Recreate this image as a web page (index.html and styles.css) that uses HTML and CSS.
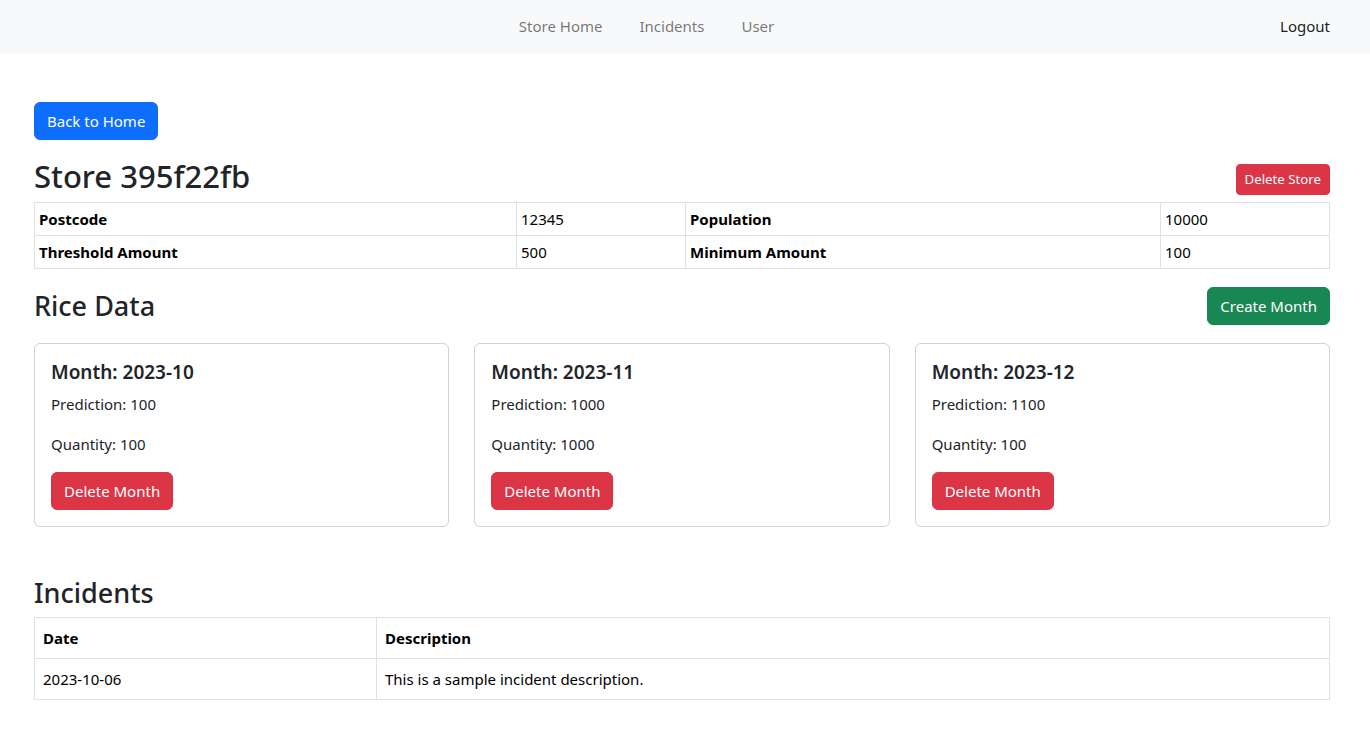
FILE: index.html
```html
<!DOCTYPE html>
<html lang="en">
<head>
<meta charset="utf-8">
<title>Store 395f22fb</title>
<link rel="stylesheet" href="styles.css">
</head>
<body>
<nav class="navbar">
  <ul class="nav-links">
    <li><a class="nav-link" href="#">Store Home</a></li>
    <li><a class="nav-link" href="#">Incidents</a></li>
    <li><a class="nav-link" href="#">User</a></li>
  </ul>
  <a class="nav-link logout" href="#">Logout</a>
</nav>
<main class="page">
  <a class="btn btn-primary back" href="#">Back to Home</a>
  <div class="header-row store-head">
    <h2 class="title">Store 395f22fb</h2>
    <button class="btn btn-danger btn-sm">Delete Store</button>
  </div>
  <table class="info-table">
    <tbody>
      <tr><th class="c1">Postcode</th><td class="c2">12345</td><th class="c3">Population</th><td>10000</td></tr>
      <tr><th class="c1">Threshold Amount</th><td class="c2">500</td><th class="c3">Minimum Amount</th><td>100</td></tr>
    </tbody>
  </table>
  <div class="header-row rice-head">
    <h3 class="subtitle">Rice Data</h3>
    <button class="btn btn-success">Create Month</button>
  </div>
  <div class="cards">
    <div class="card">
      <h5 class="card-title">Month: 2023-10</h5>
      <p>Prediction: 100</p>
      <p>Quantity: 100</p>
      <button class="btn btn-danger">Delete Month</button>
    </div>
    <div class="card">
      <h5 class="card-title">Month: 2023-11</h5>
      <p>Prediction: 1000</p>
      <p>Quantity: 1000</p>
      <button class="btn btn-danger">Delete Month</button>
    </div>
    <div class="card">
      <h5 class="card-title">Month: 2023-12</h5>
      <p>Prediction: 1100</p>
      <p>Quantity: 100</p>
      <button class="btn btn-danger">Delete Month</button>
    </div>
  </div>
  <h3 class="subtitle incidents-title">Incidents</h3>
  <table class="inc-table">
    <thead><tr><th class="d1">Date</th><th>Description</th></tr></thead>
    <tbody><tr><td>2023-10-06</td><td>This is a sample incident description.</td></tr></tbody>
  </table>
</main>
</body>
</html>
```
FILE: styles.css
```css
* { box-sizing: border-box; }
body {
  margin: 0;
  font-family: "Noto Sans", "Open Sans", sans-serif;
  font-size: 15px;
  line-height: 24px;
  color: #212529;
  background: #fff;
}
.navbar {
  height: 54px;
  background: #f8f9fa;
  display: flex;
  align-items: center;
  padding: 0 40px 2px 21px;
}
.nav-links {
  list-style: none;
  margin: 0 auto;
  padding: 0;
  display: flex;
}
.nav-link {
  display: block;
  padding: 8px 18.5px;
  color: rgba(0,0,0,.55);
  text-decoration: none;
}
.nav-link.logout { color: rgba(0,0,0,.9); padding: 8px 0 8px 8px; }
.page { padding: 48px 40px 40px 34px; }
.btn {
  display: inline-block;
  font-family: inherit;
  font-size: 15px;
  line-height: 24px;
  padding: 6px 12px;
  border: 1px solid transparent;
  border-radius: 6px;
  color: #fff;
  text-decoration: none;
  cursor: pointer;
}
.btn-primary { background: #0d6efd; border-color: #0d6efd; }
.btn-danger { background: #dc3545; border-color: #dc3545; }
.btn-success { background: #198754; border-color: #198754; }
.btn-sm { font-size: 13.25px; line-height: 21px; padding: 4px 8px; border-radius: 4px; }
.header-row {
  display: flex;
  justify-content: space-between;
}
.store-head { margin-top: 17px; align-items: flex-end; margin-bottom: 7px; }
.title { margin: 0; font-size: 31px; font-weight: 500; line-height: 38px; }
.subtitle { margin: 0; font-size: 27px; font-weight: 500; line-height: 34px; }
table { border-collapse: collapse; width: 100%; color: #000; }
th, td { border: 1px solid #dee2e6; text-align: left; vertical-align: top; }
th { font-weight: 700; }
.info-table th, .info-table td { padding: 4px; }
.info-table .c1 { width: 482px; }
.info-table .c2 { width: 169px; }
.info-table .c3 { width: 475px; }
.rice-head { margin-top: 18px; align-items: center; margin-bottom: 18px; }
.cards {
  display: grid;
  grid-template-columns: repeat(3, 1fr);
  gap: 25px;
}
.card {
  border: 1px solid rgba(0,0,0,.175);
  border-radius: 6px;
  padding: 16px;
}
.card-title { margin: 0 0 8px; font-size: 19px; font-weight: 600; line-height: 24px; }
.card p { margin: 0 0 16px; }
.incidents-title { margin-top: 49px; margin-bottom: 7px; }
.inc-table th, .inc-table td { padding: 8px; }
.inc-table .d1 { width: 342px; }
```
